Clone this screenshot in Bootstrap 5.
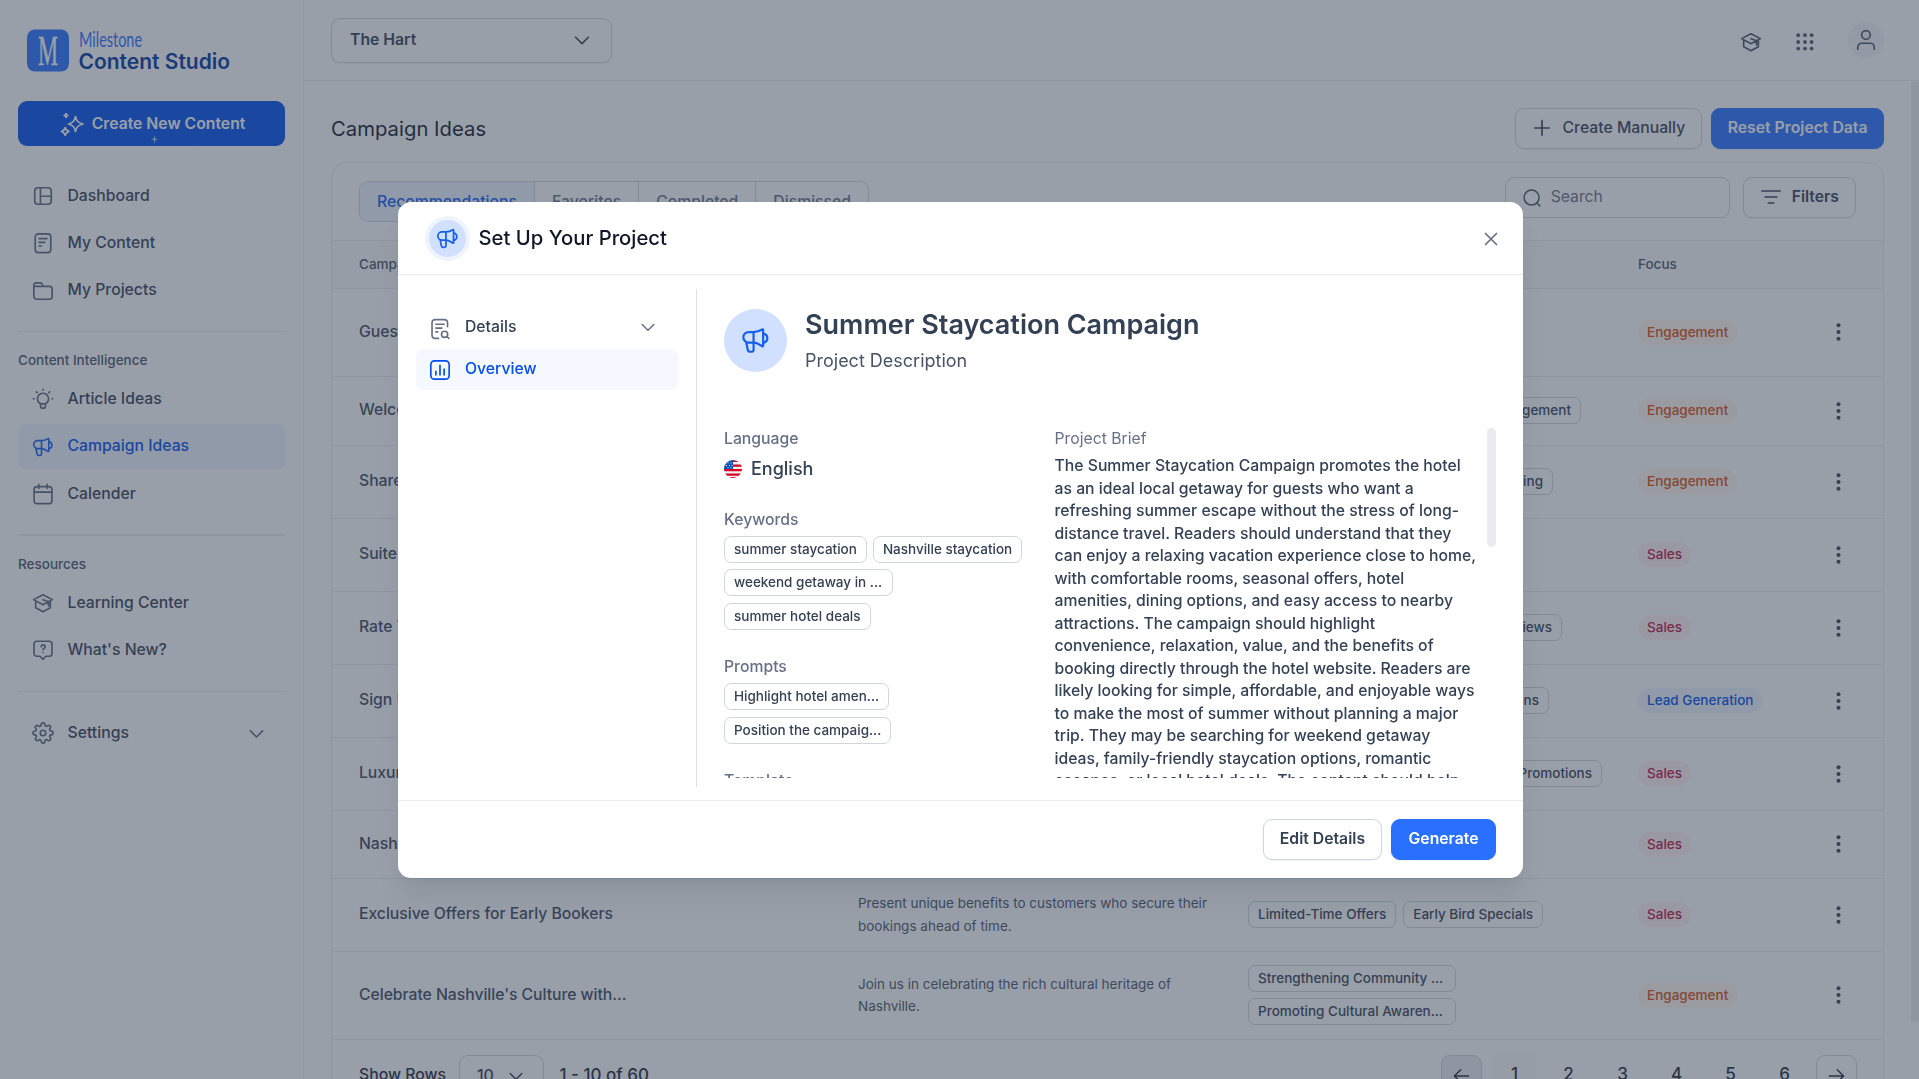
<!DOCTYPE html>
<html lang="en">
<head>
<meta charset="utf-8">
<meta name="viewport" content="width=device-width, initial-scale=1">
<title>Milestone Content Studio</title>
<link href="https://cdn.jsdelivr.net/npm/bootstrap@5.3.0/dist/css/bootstrap.min.css" rel="stylesheet">
<style>
:root{--ink:#344054;--muted:#667085;--line:#eaecf0;--edge:#d0d5dd;--blue:#155eef;--blue-btn:#2970ff}
body{font-family:Inter,"Noto Sans",sans-serif;font-size:15.75px;font-weight:500;line-height:22.5px;color:var(--ink);background:#fff;height:100vh;overflow:hidden}
svg.ico{width:22px;height:22px;fill:none;stroke:currentColor;stroke-width:1.8;stroke-linecap:round;stroke-linejoin:round;flex:none}
.side{width:304px;border-right:1px solid var(--line);padding:29px 18px 0;flex:none}
.brand{height:43px;margin-left:8px}
.brand svg{display:block}
.create-btn{height:45px;margin-top:29px;background:#004eeb;color:#fff;font-weight:600;font-size:15.75px;border-radius:9px;border:0;position:relative;overflow:hidden;padding:0 0 0 2px}
.create-btn .glint{position:absolute;left:131px;top:32px}
.nav-main{margin-top:27.5px}
.side .nav-link{height:45px;margin-bottom:2.25px;padding:0 15px 0 14px;color:var(--ink);border-radius:7px;gap:13.5px;width:268px}
.side .nav-link .ico{color:#5a667b}
.side .nav-link.active{background:#eff4ff;color:#004eeb}
.side .nav-link.active .ico{color:#155eef}
.rule{height:1px;background:var(--line)}
.group-label{font-size:13.5px;line-height:20px;color:#475467}
.topbar{height:81px;border-bottom:1px solid var(--line);padding:18px 35px 0 27px}
.site-select{width:281px;height:45px;border:1px solid var(--edge);border-radius:9px;padding:0 18px 1px 18px;font-weight:600;box-shadow:0 1px 2px rgba(16,24,40,.05)}
.avatar{width:36px;height:36px;background:#f2f4f7}
.scrollarea{height:998px;overflow:hidden;padding:27px 35px 0 27px}
.page-title{font-size:20.25px;font-weight:400;color:#101828;line-height:28px;margin:0;letter-spacing:.03px}
.ui-btn{height:41px;border-radius:9px;border:1px solid var(--edge);background:#fff;color:var(--ink);font-size:15.75px;font-weight:600;padding:0 16px 2px;box-shadow:0 1px 2px rgba(16,24,40,.05);line-height:22px}
.ui-btn.fill{background:var(--blue-btn);border-color:var(--blue-btn);color:#fff}
.panel{border:1px solid var(--line);border-radius:16px;margin-top:13px;height:1100px;overflow:hidden}
.panel-head{height:77px;padding:14px 27px 0}
.tabset{margin-top:4px;height:41px;border:1px solid var(--edge);border-radius:9px;overflow:hidden}
.tabset span{padding:1px 17px 0;border-right:1px solid var(--edge);color:#667085}
.tabset span:last-child{border-right:0}
.tabset .on{background:#eff4ff;color:#155eef}
.search{width:225px;height:41px;border:1px solid var(--edge);border-radius:9px;padding:0 16px 0;font-weight:400;color:var(--muted);gap:9px}
.ideas{table-layout:fixed;width:1551px;margin:0;border-collapse:separate;border-spacing:0}
.ideas th{font-size:13.5px;font-weight:500;color:#475467;height:48.5px;background:#f9fafb;border-top:1px solid var(--line);border-bottom:1px solid var(--line);padding:0 0 0 27px;vertical-align:middle}
.ideas td{border-bottom:1px solid var(--line);padding:0 0 0 27px;vertical-align:middle;white-space:nowrap;color:#3c485b}
.ideas td:first-child{letter-spacing:-.04px}
.ideas td:last-child{padding-left:25px}
.ideas .desc{font-size:13.5px;font-weight:400;color:#475467;white-space:normal;padding-right:8px}
.chip{display:inline-flex;align-items:center;height:27px;border:1px solid var(--edge);border-radius:7px;font-size:13.5px;font-weight:500;line-height:20px;padding:0 9px 1px;white-space:nowrap;color:var(--ink)}
.focus-tag{display:inline-flex;align-items:center;height:25px;border-radius:13px;font-size:13.5px;padding:0 9px}
.f-eng{background:#fef6ee;color:#dc4a12}.f-sal{background:#fff1f3;color:#c01048}.f-lead{background:#eff4ff;color:#004eeb}
.dots{width:5px;height:18px;display:block}
.pgr span{width:43px;height:44px;margin-right:11px;font-size:17px;color:#1d2939}
.pgr .sq{width:41px;height:41px;border:1px solid var(--edge);border-radius:9px}
.pgr .sq:last-child{margin-right:0}
.rows-select{width:85px;height:41px;border:1px solid var(--edge);border-radius:9px;margin:0 15.5px 0 13px;padding:0 17px;color:var(--ink);font-size:16px}
.rail{position:absolute;right:0;top:81px;width:8px;height:941px;background:var(--line);border-radius:4px}
.modal-backdrop.veil{background:#344054;opacity:.5}
.setup-modal{width:1125px;max-width:none;margin:202px 0 0 398px}
.setup-modal .modal-content{height:676px;border:0;border-radius:13px;box-shadow:0 22px 27px -4px rgba(16,24,40,.08),0 9px 9px -4px rgba(16,24,40,.03)}
.setup-modal .modal-header{height:73px;border-bottom:1px solid var(--line);padding:0 25px 0 27px}
.ring{width:45px;height:45px;background:#d1e0ff;border:4px solid #eff4ff;color:#155eef}
.setup-modal .modal-title{font-size:20.25px;font-weight:500;color:#101828;margin-left:8.5px}
.steps{width:299px;margin:14px 0 13px;border-right:1px solid #dfe2e7;padding:17px 18px 0}
.steps .step{height:41px;border-radius:7px;padding:1px 20px 0 13px;gap:14px;width:262px}
.steps .step.on{background:#f5f8ff;color:#004eeb;margin-top:2px;padding-top:0;padding-bottom:1px}
.hero{width:63px;height:63px;background:#d1e0ff;color:#155eef}
.proj-name{font-size:27px;font-weight:600;line-height:34px;margin:0}
.clip-box{height:350px;overflow:hidden;margin-top:56px}
.lbl{color:var(--muted)}
.setup-modal .modal-footer{height:78px;border-top:1px solid var(--line);padding:0 27px;gap:9px}
.setup-modal .modal-footer>*{margin:0}
.setup-modal .modal-footer .ui-btn{padding-left:16px;padding-right:16px}
.setup-modal .modal-footer .ui-btn.fill{padding-left:16.5px;padding-right:16.5px}
.thumb{width:9px;height:119px;background:var(--line);border-radius:5px}
</style>
<script src="https://cdn.jsdelivr.net/npm/bootstrap@5.3.0/dist/js/bootstrap.bundle.min.js"></script>
</head>
<body>
<svg width="0" height="0" class="position-absolute" aria-hidden="true">
<symbol id="mega" viewBox="0 0 24 24"><path d="M10.4 5H6.3a4.3 4.3 0 0 0 0 8.7h4.1M10.4 5v8.7M10.4 5c3 0 5.4-1 7.2-2.2.4-.2.7 0 .7.4v13.2c0 .4-.3.6-.7.4-1.8-1.3-4.2-3.1-7.2-3.1M18.3 5.9l1.4.7a3.9 3.9 0 0 1 0 6.9l-1.4.8M4.3 13.4l1.3 6.3c.2 1 .9 1.6 1.9 1.6h1.2c1 0 1.7-.7 1.7-1.7v-5.9"/></symbol>
<symbol id="dash" viewBox="0 0 24 24"><rect x="3" y="3" width="18" height="18" rx="3.5"/><path d="M9.2 3v18M9.2 12.3H21"/></symbol>
<symbol id="doc" viewBox="0 0 24 24"><rect x="3.5" y="2" width="17" height="20.5" rx="3.5"/><path d="M7.7 7.3h8.6M7.7 11.3h6.4M7.7 15.3h2.6"/></symbol>
<symbol id="folder" viewBox="0 0 24 24"><path d="M2 17.8V5.200a2 2 0 0 1 2-2h5.300a2 2 0 0 1 1.900 1.400L12 7h7a3 3 0 0 1 3 3v8a3 3 0 0 1-3 3H5.200A3.200 3.200 0 0 1 2 17.800zM2 7h10"/></symbol>
<symbol id="bulb" viewBox="0 0 24 24"><path d="M9.300 17v2.800c0 1.300 1 2.200 2.700 2.200s2.700-.9 2.700-2.200V17M9.300 17.300a6.100 6.100 0 1 1 5.400 0zM12 1.400v1M4.800 4.200l.8.8M19.200 4.200l-.8.8M1.300 11.700h1M21.700 11.700h1"/></symbol>
<symbol id="cal" viewBox="0 0 24 24"><rect x="2.300" y="4" width="19.400" height="18.500" rx="3"/><path d="M2.300 10h19.400M7.500 1.500V6M16.500 1.500V6"/></symbol>
<symbol id="cap" viewBox="0 0 24 24"><path d="M1.800 8.300 12 3l10.200 5.300L12 13.800zM4 9.800v7.400l8 4.300 8-4.300V9.800M12 8.400l6 2.300v4.600"/></symbol>
<symbol id="help" viewBox="0 0 24 24"><path d="M5.200 2.500h13.600a3 3 0 0 1 3 3v10.300a3 3 0 0 1-3 3h-3.600L12 22l-3.200-3.200H5.200a3 3 0 0 1-3-3V5.500a3 3 0 0 1 3-3zM9.900 8.300c.2-1.200 1.100-1.900 2.200-1.900 1.300 0 2.300.8 2.300 2 0 1.600-2.300 1.700-2.300 3.300M12.100 14.600v.1"/></symbol>
<symbol id="gear" viewBox="0 0 24 24"><circle cx="12" cy="12" r="3"/><path d="M19.400 15a1.650 1.650 0 0 0 .33 1.820l.06.06a2 2 0 1 1-2.830 2.830l-.06-.06a1.650 1.650 0 0 0-1.820-.33 1.650 1.650 0 0 0-1 1.510V21a2 2 0 0 1-4 0v-.09A1.650 1.650 0 0 0 9 19.400a1.650 1.650 0 0 0-1.820.33l-.06.06a2 2 0 1 1-2.830-2.830l.06-.06a1.650 1.650 0 0 0 .33-1.820 1.650 1.650 0 0 0-1.510-1H3a2 2 0 0 1 0-4h.09A1.650 1.650 0 0 0 4.600 9a1.650 1.650 0 0 0-.33-1.820l-.06-.06a2 2 0 1 1 2.830-2.830l.06.06a1.650 1.650 0 0 0 1.820.33H9a1.650 1.650 0 0 0 1-1.510V3a2 2 0 0 1 4 0v.09a1.650 1.650 0 0 0 1 1.510 1.650 1.650 0 0 0 1.820-.33l.06-.06a2 2 0 1 1 2.830 2.830l-.06.06a1.650 1.650 0 0 0-.33 1.820V9a1.650 1.650 0 0 0 1.510 1H21a2 2 0 0 1 0 4h-.09a1.650 1.650 0 0 0-1.510 1z"/></symbol>
<symbol id="chev" viewBox="0 0 24 24"><path d="m5 9 7 7 7-7"/></symbol>
<symbol id="user" viewBox="0 0 24 24"><circle cx="12" cy="6.500" r="4.700"/><path d="M3 22v-2a4.500 4.500 0 0 1 4.500-4.500h9A4.500 4.500 0 0 1 21 20v2"/></symbol>
<symbol id="plus" viewBox="0 0 24 24"><path d="M12 4v16M4 12h16"/></symbol>
<symbol id="find" viewBox="0 0 24 24"><circle cx="11.500" cy="11.500" r="9"/><path d="m18 18 3.500 3.500"/></symbol>
<symbol id="filt" viewBox="0 0 24 24"><path d="M2 5.500h20M5.500 12h13M9 18.500h6"/></symbol>
<symbol id="docfind" viewBox="0 0 24 24"><path d="M20.200 9.500V5a3.300 3.300 0 0 0-3.300-3.300H6.600A3.300 3.300 0 0 0 3.300 5v14a3.300 3.300 0 0 0 3.300 3.300h3.800M7.500 6.800h9M7.500 11h6.500M7.500 15.200h2"/><circle cx="17" cy="17.800" r="3.400"/><path d="m19.600 20.200 2 2"/></symbol>
<symbol id="chart" viewBox="0 0 24 24"><rect x="2" y="2" width="20" height="20" rx="4"/><path d="M7.500 13.500v4M12 7v10.500M16.500 11v6.500"/></symbol>
<symbol id="left" viewBox="0 0 24 24"><path d="M21 12H3M11 4l-8 8 8 8"/></symbol>
<symbol id="right" viewBox="0 0 24 24"><path d="M3 12h18M13 4l8 8-8 8"/></symbol>
<symbol id="vdots" viewBox="0 0 5 18"><g fill="#344054" stroke="none"><circle cx="2.500" cy="2.300" r="2"/><circle cx="2.500" cy="9" r="2"/><circle cx="2.500" cy="15.700" r="2"/></g></symbol>
</svg>

<div class="d-flex vh-100">
  <aside class="side">
    <div class="brand">
      <svg width="230" height="46" viewBox="0 0 230 46">
        <rect x="1" y=".5" width="42" height="42" rx="8" fill="#2970ff"/>
        <text x="12" y="35.500" font-family="Liberation Serif, serif" font-size="43" fill="#fff" stroke="#fff" stroke-width=".4" textLength="20" lengthAdjust="spacingAndGlyphs">M</text>
        <text x="53" y="18.200" font-family="Lato, sans-serif" font-size="20.500" font-weight="400" fill="#2970ff" textLength="63" lengthAdjust="spacingAndGlyphs">Milestone</text>
        <text x="52.500" y="40" font-family="Inter, sans-serif" font-size="21" font-weight="600" fill="#00359e">Content Studio</text>
      </svg>
    </div>
    <button class="btn create-btn w-100 d-flex align-items-center justify-content-center gap-2">
      <svg width="24" height="24" viewBox="0 0 24 24" fill="none" stroke="#fff" stroke-width="1.700" stroke-linejoin="round"><path d="M15.500 4.500c1 4.600 2.500 6.200 7.500 7.500-5 1.300-6.500 2.900-7.500 7.500-1-4.600-2.500-6.200-7-7.500 4.500-1.300 6-2.900 7-7.500zM5.200 15.500c.5 2.400 1.300 3.300 3.800 4-2.500.7-3.300 1.500-3.800 3.900-.5-2.400-1.300-3.200-3.800-3.900 2.500-.7 3.300-1.600 3.800-4z"/><path d="M6 1v5M3.500 3.500h5" stroke-width="2"/></svg>
      <span>Create New Content</span>
      <svg class="glint" width="60" height="14" viewBox="0 0 60 14"><path d="M5.500 2 6.300 5.400 9 6.200 6.300 7 5.500 10.400 4.700 7 2 6.200 4.700 5.400z" fill="#fff" opacity=".7"/><circle cx="46" cy="13.200" r=".8" fill="#fff" opacity=".7"/></svg>
    </button>
    <nav class="nav flex-column nav-main">
      <a class="nav-link d-flex align-items-center"><svg class="ico"><use href="#dash"/></svg>Dashboard</a>
      <a class="nav-link d-flex align-items-center"><svg class="ico"><use href="#doc"/></svg>My Content</a>
      <a class="nav-link d-flex align-items-center"><svg class="ico"><use href="#folder"/></svg>My Projects</a>
    </nav>
    <div class="rule" style="margin-top:16px"></div>
    <div class="group-label" style="margin:18px 0 6.500px">Content Intelligence</div>
    <nav class="nav flex-column">
      <a class="nav-link d-flex align-items-center"><svg class="ico"><use href="#bulb"/></svg>Article Ideas</a>
      <a class="nav-link d-flex align-items-center active"><svg class="ico"><use href="#mega"/></svg>Campaign Ideas</a>
      <a class="nav-link d-flex align-items-center"><svg class="ico"><use href="#cal"/></svg>Calender</a>
    </nav>
    <div class="rule" style="height:2px;margin-top:15px"></div>
    <div class="group-label" style="margin:18px 0 7.200px">Resources</div>
    <nav class="nav flex-column">
      <a class="nav-link d-flex align-items-center"><svg class="ico"><use href="#cap"/></svg>Learning Center</a>
      <a class="nav-link d-flex align-items-center"><svg class="ico"><use href="#help"/></svg>What's New?</a>
    </nav>
    <div class="rule" style="margin-top:15.500px"></div>
    <nav class="nav flex-column" style="margin-top:19px">
      <a class="nav-link d-flex align-items-center"><svg class="ico"><use href="#gear"/></svg>Settings<svg class="ico ms-auto" style="width:21px;height:21px;margin-right:4px"><use href="#chev"/></svg></a>
    </nav>
  </aside>

  <main class="flex-grow-1 position-relative">
    <header class="topbar d-flex justify-content-between align-items-start">
      <div class="site-select d-flex align-items-center justify-content-between">The Hart<svg class="ico"><use href="#chev"/></svg></div>
      <div class="d-flex align-items-center" style="margin-top:4px">
        <svg class="ico" style="color:#475467;margin:4px 34px 0 0"><use href="#cap"/></svg>
        <svg width="18" height="18" viewBox="0 0 18 18" fill="#475467" style="margin:4px 34px 0 0"><circle cx="2.200" cy="2.200" r="1.900"/><circle cx="9" cy="2.200" r="1.900"/><circle cx="15.600" cy="2.200" r="1.900"/><circle cx="2.200" cy="9" r="1.900"/><circle cx="9" cy="9" r="1.900"/><circle cx="15.600" cy="9" r="1.900"/><circle cx="2.200" cy="15.600" r="1.900"/><circle cx="9" cy="15.600" r="1.900"/><circle cx="15.600" cy="15.600" r="1.900"/></svg>
        <div class="avatar rounded-circle d-flex align-items-center justify-content-center"><svg class="ico" style="color:#475467"><use href="#user"/></svg></div>
      </div>
    </header>
    <div class="scrollarea">
      <div class="d-flex justify-content-between align-items-center" style="height:41px">
        <h1 class="page-title">Campaign Ideas</h1>
        <div class="d-flex" style="gap:9px">
          <button class="btn ui-btn d-flex align-items-center" style="font-weight:500;gap:10px;padding-left:15px"><svg class="ico"><use href="#plus"/></svg>Create Manually</button>
          <button class="btn ui-btn fill" style="padding-left:15.500px;padding-right:15.500px">Reset Project Data</button>
        </div>
      </div>
      <section class="panel">
        <div class="panel-head d-flex justify-content-between align-items-start">
          <div class="tabset d-flex"><span class="on d-flex align-items-center">Recommendations</span><span class="d-flex align-items-center">Favorites</span><span class="d-flex align-items-center">Completed</span><span class="d-flex align-items-center">Dismissed</span></div>
          <div class="d-flex" style="gap:13px">
            <div class="search d-flex align-items-center"><svg class="ico" style="width:20px;color:#475467"><use href="#find"/></svg>Search</div>
            <button class="btn ui-btn d-flex align-items-center" style="gap:10px"><svg class="ico"><use href="#filt"/></svg>Filters</button>
          </div>
        </div>
        <table class="ideas">
          <colgroup><col style="width:499px"><col style="width:390px"><col style="width:390px"><col style="width:200px"><col></colgroup>
          <thead><tr><th>Campaign</th><th>Description</th><th>Topics</th><th>Focus</th><th></th></tr></thead>
          <tbody id="ideaRows"></tbody>
        </table>
        <div class="d-flex justify-content-between align-items-start" style="padding:15.500px 26px 0 27px">
          <div class="d-flex align-items-center" style="color:#1d2939">Show Rows
            <span class="rows-select d-flex align-items-center justify-content-between">10<svg class="ico" style="width:20px"><use href="#chev"/></svg></span><span style="font-size:17px">1 - 10 of 60</span></div>
          <div class="pgr d-flex">
            <span class="sq d-flex align-items-center justify-content-center" style="background:#eaecf0"><svg class="ico" style="width:19px"><use href="#left"/></svg></span>
            <span class="d-flex align-items-center justify-content-center rounded-3" style="background:#f9fafb;margin-top:-3px">1</span>
            <span class="d-flex align-items-center justify-content-center" style="margin-top:-3px">2</span>
            <span class="d-flex align-items-center justify-content-center" style="margin-top:-3px">3</span>
            <span class="d-flex align-items-center justify-content-center" style="margin-top:-3px">4</span>
            <span class="d-flex align-items-center justify-content-center" style="margin-top:-3px">5</span>
            <span class="d-flex align-items-center justify-content-center" style="margin-top:-3px;margin-right:10px">6</span>
            <span class="sq d-flex align-items-center justify-content-center"><svg class="ico" style="width:19px"><use href="#right"/></svg></span>
          </div>
        </div>
      </section>
    </div>
    <div class="rail"></div>
  </main>
</div>

<div class="modal-backdrop veil"></div>
<div class="modal d-block overflow-hidden" tabindex="-1">
  <div class="modal-dialog setup-modal">
    <div class="modal-content">
      <div class="modal-header">
        <div class="d-flex align-items-center">
          <div class="ring rounded-circle d-flex align-items-center justify-content-center"><svg class="ico" style="width:23px;height:23px"><use href="#mega"/></svg></div>
          <h2 class="modal-title">Set Up Your Project</h2>
        </div>
        <svg width="14" height="14" viewBox="0 0 14 14" fill="none" stroke="#667085" stroke-width="1.700" stroke-linecap="round" style="margin-top:1px"><path d="m1.500 1.500 11 11M12.500 1.500l-11 11"/></svg>
      </div>
      <div class="modal-body p-0 d-flex">
        <div class="steps">
          <div class="step d-flex align-items-center"><svg class="ico" style="color:#667085;margin-top:3px;width:22px"><use href="#docfind"/></svg>Details<svg class="ico ms-auto" style="color:#667085;width:20px"><use href="#chev"/></svg></div>
          <div class="step on d-flex align-items-center"><svg class="ico" style="margin-top:1px;width:22px"><use href="#chart"/></svg>Overview</div>
        </div>
        <div class="flex-grow-1" style="padding:34px 27px 0 27px">
          <div class="d-flex" style="height:63px">
            <div class="hero rounded-circle d-flex align-items-center justify-content-center"><svg class="ico" style="width:29px;height:29px"><use href="#mega"/></svg></div>
            <div style="margin:-1px 0 0 18px">
              <h3 class="proj-name">Summer Staycation Campaign</h3>
              <div style="font-size:18px;font-weight:400;line-height:27px;margin-top:5px;color:#475467">Project Description</div>
            </div>
          </div>
          <div class="clip-box d-flex">
            <div style="width:330.500px;padding-right:20px">
              <div class="lbl">Language</div>
              <div class="d-flex align-items-center" style="font-size:18px;line-height:27px;margin-top:4.500px;gap:9px">
                <svg width="18" height="18" viewBox="0 0 18 18"><clipPath id="disc"><circle cx="9" cy="9" r="9"/></clipPath><g clip-path="url(#disc)"><path fill="#f0f0f0" d="M0 0h18v18H0z"/><path fill="#d80027" d="M9 0h9v2H9zM9 4.500h9v2.300H9zM0 9h18v2.300H0zM0 13.500h18v2.200H0zM4 17h10v1H4z"/><path fill="#0052b4" d="M0 0h9v9H0z"/><path fill="#f0f0f0" d="M3.500 2.500h1v1h-1zM6.500 2.500h1v1h-1zM2 5h1v1H2zM5 5h1v1H5zM7.500 5h1v1h-1zM3.500 7.200h1v1h-1zM6.500 7.200h1v1h-1z"/></g></svg>English</div>
              <div class="lbl" style="margin-top:27px">Keywords</div>
              <div class="d-flex flex-wrap" style="gap:6.700px 6px;margin-top:4.200px"><span class="chip">summer staycation</span><span class="chip">Nashville staycation</span><span class="chip" style="width:169px">weekend getaway in ...</span><span class="chip">summer hotel deals</span></div>
              <div class="lbl" style="margin-top:26.400px">Prompts</div>
              <div class="d-flex flex-column align-items-start" style="gap:6.700px;margin-top:4.500px"><span class="chip">Highlight hotel amen...</span><span class="chip">Position the campaig...</span></div>
              <div class="lbl" style="margin-top:26px">Template</div>
            </div>
            <div style="width:424px">
              <div class="lbl" style="font-weight:400">Project Brief</div>
              <div style="line-height:22.500px;margin-top:4.700px">The Summer Staycation Campaign promotes the hotel<br>as an ideal local getaway for guests who want a<br>refreshing summer escape without the stress of long-<br>distance travel. Readers should understand that they<br>can enjoy a relaxing vacation experience close to home,<br>with comfortable rooms, seasonal offers, hotel<br>amenities, dining options, and easy access to nearby<br>attractions. The campaign should highlight<br>convenience, relaxation, value, and the benefits of<br>booking directly through the hotel website. Readers are<br>likely looking for simple, affordable, and enjoyable ways<br>to make the most of summer without planning a major<br>trip. They may be searching for weekend getaway<br>ideas, family-friendly staycation options, romantic<br>escapes, or local hotel deals. The content should help</div>
            </div>
            <div class="thumb ms-auto"></div>
          </div>
        </div>
      </div>
      <div class="modal-footer">
        <button class="btn ui-btn">Edit Details</button>
        <button class="btn ui-btn fill">Generate</button>
      </div>
    </div>
  </div>
</div>

<script>
// h: row height, w: width of the tag strip when its tags are right-aligned
const ideas = [
  {t:"Guest Favorites", h:88, f:"eng"},
  {t:"Welcome Offers", h:69, f:"eng", w:333, tags:["Guest Engagement"]},
  {t:"Share Your Stay", h:73, f:"eng", w:305, tags:["Social Sharing"]},
  {t:"Suite Upgrades", h:73, f:"sal"},
  {t:"Rate Your Visit", h:73, f:"sal", w:314, tags:["Guest Reviews"]},
  {t:"Sign Up Today", h:73, f:"lead", w:301, tags:["Promotions"]},
  {t:"Luxury Escapes", h:73, f:"sal", w:354, tags:["Seasonal Promotions"]},
  {t:"Nashville Nights", h:68, f:"sal"},
  {t:"Exclusive Offers for Early Bookers", h:73, f:"sal", d:"Present unique benefits to customers who secure their bookings ahead of time.", tags:["Limited-Time Offers","Early Bird Specials"]},
  {t:"Celebrate Nashville's Culture with...", h:88, f:"eng", d:"Join us in celebrating the rich cultural heritage of Nashville.", tags:["Strengthening Community ...","Promoting Cultural Awaren..."], wide:208}
];
ideas[2].w = 305;
const focus = {eng:"Engagement", sal:"Sales", lead:"Lead Generation"};
document.getElementById("ideaRows").innerHTML = ideas.map(r => `<tr style="height:${r.h}px">
  <td>${r.t}</td><td class="desc">${r.d || ""}</td>
  <td><div class="d-flex flex-wrap ${r.w ? "justify-content-end" : ""}" style="gap:6.5px 7px${r.w ? ";width:" + r.w + "px" : ""}">${(r.tags || []).map(x => `<span class="chip"${r.wide ? ` style="width:${r.wide}px"` : ""}>${x}</span>`).join("")}</div></td>
  <td><span class="focus-tag f-${r.f}">${focus[r.f]}</span></td>
  <td><svg class="dots"><use href="#vdots"/></svg></td></tr>`).join("");
</script>
</body>
</html>
